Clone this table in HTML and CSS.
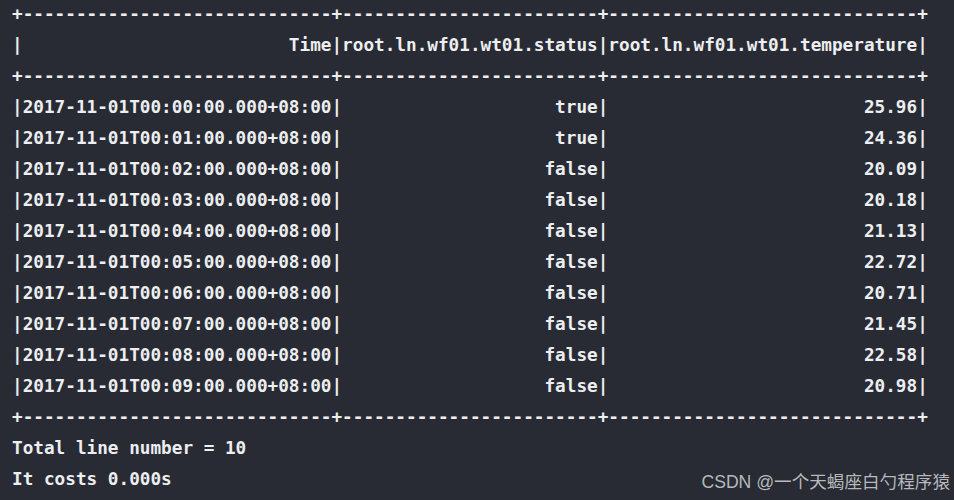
FILE: index.html
```html
<!DOCTYPE html>
<html lang="zh-CN">
<head>
    <meta charset="UTF-8">
    <meta name="viewport" content="width=device-width, initial-scale=1.0">
    <title>IoTDB query result</title>
    <link rel="stylesheet" href="styles.css">
</head>
<body>
    <div class="terminal">
<pre class="output">+-----------------------------+------------------------+-----------------------------+
|                         Time|root.ln.wf01.wt01.status|root.ln.wf01.wt01.temperature|
+-----------------------------+------------------------+-----------------------------+
|2017-11-01T00:00:00.000+08:00|                    true|                        25.96|
|2017-11-01T00:01:00.000+08:00|                    true|                        24.36|
|2017-11-01T00:02:00.000+08:00|                   false|                        20.09|
|2017-11-01T00:03:00.000+08:00|                   false|                        20.18|
|2017-11-01T00:04:00.000+08:00|                   false|                        21.13|
|2017-11-01T00:05:00.000+08:00|                   false|                        22.72|
|2017-11-01T00:06:00.000+08:00|                   false|                        20.71|
|2017-11-01T00:07:00.000+08:00|                   false|                        21.45|
|2017-11-01T00:08:00.000+08:00|                   false|                        22.58|
|2017-11-01T00:09:00.000+08:00|                   false|                        20.98|
+-----------------------------+------------------------+-----------------------------+
Total line number = 10
It costs 0.000s</pre>
        <div class="watermark">CSDN @一个天蝎座白勺程序猿</div>
    </div>
</body>
</html>
```

FILE: styles.css
```css
*{margin: 0; padding: 0; box-sizing: border-box;}
html, body{
    width: 100%;
    height: 100%;
    background-color: #282b33;
    overflow: hidden;
}
.terminal{
    position: relative;
    width: 954px;
    height: 500px;
    padding: 0 0 0 12px;
}
.output{
    margin-top: -1px;
    font-family: "DejaVu Sans Mono", "Liberation Mono", monospace;
    font-weight: bold;
    font-size: 17.7px;
    line-height: 31px;
    color: #eceef0;
}
.watermark{
    position: absolute;
    right: 4px;
    bottom: 7px;
    font-family: "Liberation Sans", "Noto Sans CJK SC", sans-serif;
    font-size: 17.6px;
    line-height: 20px;
    color: rgba(210, 212, 216, 0.85);
}
```
